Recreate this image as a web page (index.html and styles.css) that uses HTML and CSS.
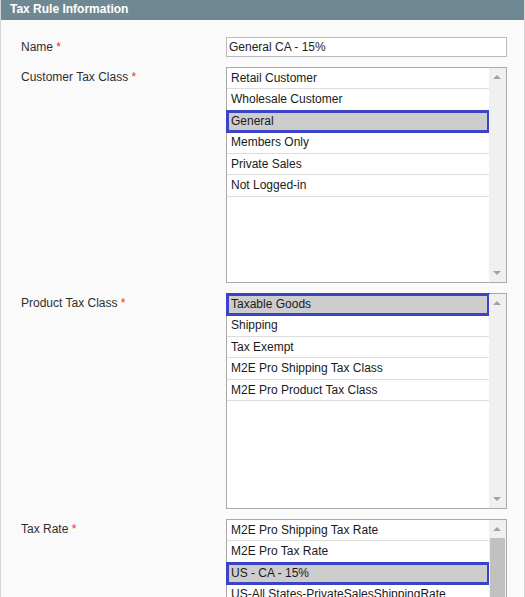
FILE: index.html
```html
<!DOCTYPE html>
<html>
<head>
<meta charset="utf-8">
<link rel="stylesheet" href="styles.css">
</head>
<body>
<div class="panel">
  <div class="head">Tax Rule Information</div>
  <div class="form">
    <div class="label">Name <span class="req">*</span></div>
    <div class="field"><div class="input">General CA - 15%</div></div>

    <div class="label">Customer Tax Class <span class="req">*</span></div>
    <div class="field">
      <div class="listbox">
        <div class="options">
          <div class="opt">Retail Customer</div>
          <div class="opt">Wholesale Customer</div>
          <div class="opt sel">General</div>
          <div class="opt">Members Only</div>
          <div class="opt">Private Sales</div>
          <div class="opt">Not Logged-in</div>
        </div>
        <div class="sb"><span class="up"></span><span class="dn"></span></div>
      </div>
    </div>

    <div class="label">Product Tax Class <span class="req">*</span></div>
    <div class="field">
      <div class="listbox">
        <div class="options">
          <div class="opt sel">Taxable Goods</div>
          <div class="opt">Shipping</div>
          <div class="opt">Tax Exempt</div>
          <div class="opt">M2E Pro Shipping Tax Class</div>
          <div class="opt">M2E Pro Product Tax Class</div>
        </div>
        <div class="sb"><span class="up"></span><span class="dn"></span></div>
      </div>
    </div>

    <div class="label">Tax Rate <span class="req">*</span></div>
    <div class="field">
      <div class="listbox short">
        <div class="options">
          <div class="opt">M2E Pro Shipping Tax Rate</div>
          <div class="opt">M2E Pro Tax Rate</div>
          <div class="opt sel">US - CA - 15%</div>
          <div class="opt">US-All States-PrivateSalesShippingRate</div>
        </div>
        <div class="sb"><span class="up"></span><span class="thumb"></span></div>
      </div>
    </div>
  </div>
</div>
</body>
</html>
```

FILE: styles.css
```css
html, body {
  margin: 0;
  padding: 0;
  background: #fafafa;
  overflow: hidden;
}
body {
  width: 525px;
  height: 597px;
  font-family: "Liberation Sans", Arial, sans-serif;
  font-size: 12px;
  color: #2f2f2f;
}
.panel {
  border-left: 1px solid #d6d6d6;
  border-right: 1px solid #d6d6d6;
  height: 597px;
  box-sizing: border-box;
  overflow: hidden;
}
.head {
  background: #6f8992;
  color: #fff;
  font-weight: bold;
  height: 20px;
  line-height: 19px;
  padding-left: 10px;
  margin-left: -1px;
  margin-right: -1px;
}
.form {
  display: grid;
  grid-template-columns: 205px 281px;
  row-gap: 10px;
  padding: 17px 0 0 20px;
}
.label {
  line-height: 20px;
}
.req {
  color: #eb340a;
}
.input {
  border: 1px solid #bbb;
  background: #fff;
  height: 18px;
  line-height: 18px;
  padding-left: 2px;
  color: #222;
  font-size: 12px;
}
.listbox {
  border: 1px solid #aaa;
  background: #fff;
  height: 214px;
  display: flex;
}
.listbox.short {
  height: 86px;
  border-bottom: none;
}
.options {
  flex: 1;
}
.opt {
  height: 20.45px;
  line-height: 20.5px;
  border-bottom: 1px solid #ddd;
  padding-left: 4px;
  color: #1a1a1a;
  font-size: 12px;
  white-space: nowrap;
  overflow: hidden;
}
.opt.sel {
  background: #cdcdcd;
  outline: 3px solid #3c44c6;
  outline-offset: -2px;
  position: relative;
  border-bottom-color: #cdcdcd;
}
.sb {
  width: 17px;
  background: #f0f0f0;
  position: relative;
}
.up, .dn {
  position: absolute;
  left: 4px;
  width: 0;
  height: 0;
  border-left: 4px solid transparent;
  border-right: 4px solid transparent;
}
.up {
  top: 7px;
  border-bottom: 4px solid #a3a3a3;
}
.dn {
  bottom: 7px;
  border-top: 4px solid #a3a3a3;
}
.thumb {
  position: absolute;
  left: 1px;
  right: 1px;
  top: 18px;
  bottom: 0;
  background: #c1c1c1;
}
```
